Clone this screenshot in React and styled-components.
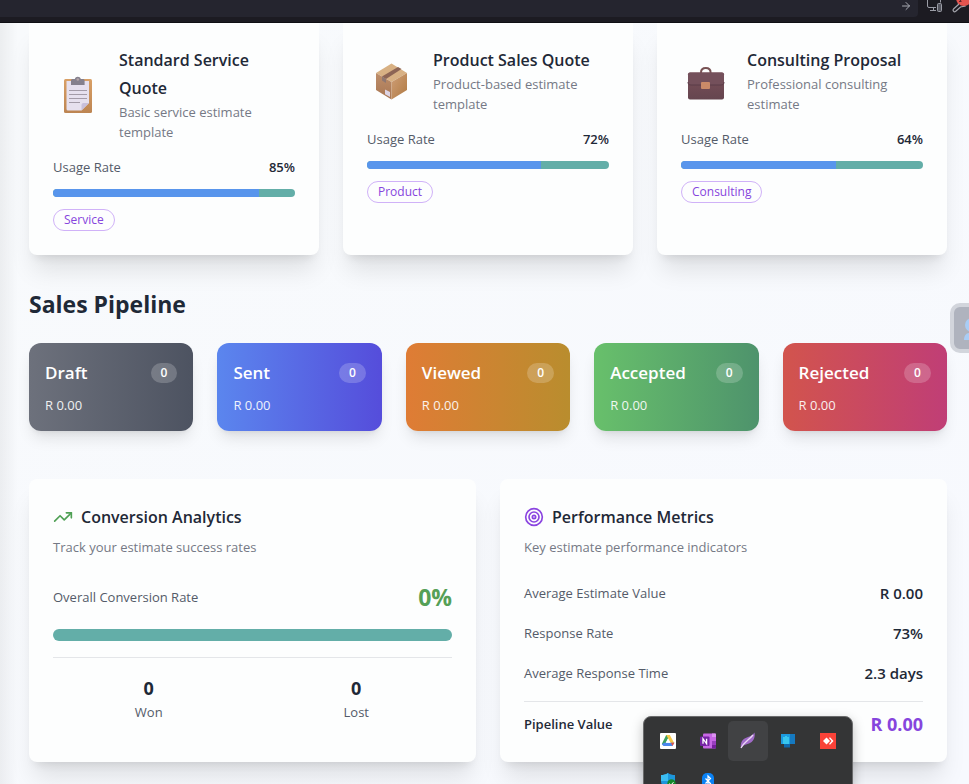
import React from "react";
import styled, { createGlobalStyle } from "styled-components";
import { ArrowRight, TrendingUp } from "lucide-react";

const GlobalStyle = createGlobalStyle`
  *, *::before, *::after { box-sizing: border-box; }
  body {
    margin: 0;
    font-family: "Open Sans", "Noto Sans", sans-serif;
    font-size: 13px;
    line-height: 20px;
    color: #1f2937;
    background: #f7f9fc;
  }
  h2, h3, p, dl, dd, dt { margin: 0; font: inherit; }
`;

const Shell = styled.div`
  display: flex;
  flex-direction: column;
  min-height: 100vh;
`;

/* Browser toolbar */
const Toolbar = styled.header`
  display: flex;
  align-items: flex-start;
  height: 23px;
  background: #1c1b22;
  border-bottom: 1px solid #0f0f14;
  overflow: hidden;
`;

const AddressBar = styled.div`
  flex: 1;
  display: flex;
  justify-content: flex-end;
  height: 17px;
  padding-right: 6px;
  border-radius: 0 0 4px 0;
  background: #25252f;
`;

const BarButton = styled.button`
  display: flex;
  padding: 0;
  border: 0;
  background: none;
  color: #a9abb3;
`;

const BarTools = styled.div`
  display: flex;
  gap: 8px;
  width: 51px;
  padding-left: 8px;
`;

/* Page */
const Main = styled.main`
  flex: 1;
  padding: 0 22px 22px 29px;
  overflow: hidden;
  background:
    linear-gradient(to right, rgba(0, 0, 0, 0.05), rgba(0, 0, 0, 0) 18px),
    linear-gradient(to bottom right, #f8fafc, #f7f9fe);
`;

const Grid = styled.section`
  display: grid;
  grid-template-columns: repeat(${(p) => p.$columns}, minmax(0, 1fr));
  gap: 24px;
`;

const Card = styled.article`
  padding: ${(p) => (p.$flush ? "23px 24px 24px" : "24px")};
  border-radius: ${(p) => (p.$flush ? "0 0 8px 8px" : "8px")};
  background: #fdfefe;
  box-shadow: 0 20px 25px -5px rgba(0, 0, 0, 0.1), 0 8px 10px -6px rgba(0, 0, 0, 0.1);
`;

const TemplateHead = styled.div`
  display: flex;
  align-items: center;
  gap: 16px;
`;

const Emoji = styled.svg`
  flex: none;
  width: 50px;
  height: 44px;
`;

const CardTitle = styled.h3`
  display: flex;
  align-items: center;
  gap: 8px;
  font-size: 16px;
  font-weight: 600;
  line-height: 28px;
`;

const Description = styled.p`
  margin-top: ${(p) => (p.$spaced ? "6px" : "0")};
  color: #757985;
`;

const Row = styled.div`
  display: flex;
  align-items: center;
  justify-content: space-between;
`;

const UsageRow = styled(Row)`
  margin-top: 15px;
`;

const Label = styled.span`
  color: #545b69;
`;

const Strong = styled.span`
  font-weight: 600;
`;

const Track = styled.div`
  height: ${(p) => (p.$thick ? "12px" : "8px")};
  margin-top: ${(p) => (p.$thick ? "16px" : "12px")};
  border-radius: 6px;
  overflow: hidden;
  background: #63aea8;
`;

const Fill = styled.div`
  height: 100%;
  background: #5895ec;
`;

const Tag = styled.span`
  display: inline-flex;
  align-items: center;
  height: 22px;
  margin-top: 12px;
  padding: 0 10px;
  border: 1px solid #d0b2f8;
  border-radius: 11px;
  font-size: 12px;
  font-weight: 500;
  line-height: 16px;
  color: #8645dd;
  vertical-align: top;
`;

const SectionTitle = styled.h2`
  margin: 33px 0 23px;
  font-size: 23px;
  font-weight: 700;
  line-height: 32px;
`;

const Stage = styled.article`
  padding: 16px;
  border-radius: 12px;
  color: #fff;
  background: linear-gradient(to right, ${(p) => p.$from}, ${(p) => p.$to});
  box-shadow: 0 10px 15px -3px rgba(0, 0, 0, 0.1), 0 4px 6px -4px rgba(0, 0, 0, 0.1);
`;

const StageName = styled.h3`
  font-size: 17px;
  font-weight: 600;
  line-height: 28px;
`;

const Count = styled.span`
  padding: 2px 10px;
  border-radius: 10px;
  background: rgba(255, 255, 255, 0.2);
  font-size: 12px;
  font-weight: 600;
  line-height: 16px;
`;

const StageValue = styled.p`
  margin-top: 8px;
  opacity: 0.9;
`;

const Reports = styled(Grid)`
  margin-top: 48px;
`;

const CardBody = styled.div`
  margin-top: 24px;
`;

const Rate = styled.span`
  font-size: 23px;
  font-weight: 700;
  line-height: 32px;
  color: #55a057;
`;

const Stats = styled.dl`
  display: grid;
  grid-template-columns: 1fr 1fr;
  gap: 16px;
  margin-top: 16px;
  padding-top: 16px;
  border-top: 1px solid #e4e6e9;
  text-align: center;
`;

const Stat = styled.div`
  display: flex;
  flex-direction: column-reverse;
  dt { color: #545b69; }
  dd { font-size: 18px; font-weight: 700; line-height: 28px; }
`;

const Metrics = styled.dl`
  display: flex;
  flex-direction: column;
  gap: 16px;
`;

const Metric = styled(Row)`
  dt { color: #545b69; }
  dd { font-size: 15px; font-weight: 600; line-height: 24px; }
`;

const Total = styled(Row)`
  padding-top: 8px;
  border-top: 1px solid #e4e6e9;
  dt { font-weight: 600; }
  dd { font-size: 18px; font-weight: 700; line-height: 28px; color: #8645dd; }
`;

/* Overlays */
const SideHandle = styled.button`
  position: fixed;
  top: 303px;
  right: -31px;
  display: flex;
  align-items: center;
  width: 50px;
  height: 50px;
  padding: 0 0 0 10px;
  border: 4px solid #d2d5dc;
  border-radius: 10px;
  background: #afb3be;
`;

const Tray = styled.aside`
  position: fixed;
  right: 116px;
  bottom: -23px;
  display: grid;
  grid-template-columns: repeat(5, 40px);
  padding: 4px 4px 5px;
  border: 1px solid #6a6b6c;
  border-radius: 8px;
  background: #343536;
  box-shadow: 0 4px 12px rgba(0, 0, 0, 0.25);
`;

const TrayButton = styled.button`
  display: flex;
  align-items: center;
  justify-content: center;
  height: 40px;
  padding: 0;
  border: 0;
  border-radius: 5px;
  background: ${(p) => (p.$active ? "#414244" : "transparent")};
`;

const Clipboard = () => (
  <Emoji viewBox="0 0 50 44" aria-hidden="true">
    <defs>
      <linearGradient id="board" x1="0" y1="0" x2="0" y2="1">
        <stop offset="0" stopColor="#d9a066" />
        <stop offset="1" stopColor="#bd8552" />
      </linearGradient>
    </defs>
    <rect x="11" y="7" width="28" height="34" rx="1.5" fill="url(#board)" />
    <path d="M13.500 9h22.500v22l-7.500 7.500H15a1.500 1.500 0 0 1-1.500-1.500z" fill="#e6e0ee" />
    <path d="M36 31l-7.500 7.500V33a2 2 0 0 1 2-2z" fill="#c8bfda" />
    <path d="M18 13V8.500c0-1 .8-1.500 1.800-1.500h2c.5-1.500 1.500-2.200 3-2.200s2.500.7 3 2.200h2c1 0 1.800.5 1.800 1.500V13z" fill="#85808d" />
    <circle cx="24.800" cy="7.500" r="1.300" fill="#b4a5a8" />
    <path d="M16 18.500h18M16 22.500h18M16 26.500h18M16 30.500h11" stroke="#a39ba8" strokeWidth="1" />
  </Emoji>
);

const Package = () => (
  <Emoji viewBox="0 0 50 44" aria-hidden="true">
    <defs>
      <linearGradient id="boxRight" x1="0" y1="0" x2="1" y2="1">
        <stop offset="0" stopColor="#cf9f78" />
        <stop offset="1" stopColor="#b07a42" />
      </linearGradient>
      <linearGradient id="boxLeft" x1="0" y1="0" x2="0" y2="1">
        <stop offset="0" stopColor="#bd8e6b" />
        <stop offset="1" stopColor="#a87652" />
      </linearGradient>
    </defs>
    <path d="M9 15l15.500-9.500L40 15l-15.500 9z" fill="#d8b184" />
    <path d="M9 15l15.500 9v17.500L9 32z" fill="url(#boxLeft)" />
    <path d="M40 15l-15.500 9v17.500L40 32z" fill="url(#boxRight)" />
    <path d="M15 18.500L31 9l3.500 2-15.500 10z" fill="#8d6555" />
    <path d="M15 18.500l4 2.500v4l-4-2.500z" fill="#8f7770" />
    <path d="M18 31.500l5 2.500v5l-5-2.800z" fill="#ddd4e4" />
  </Emoji>
);

const Briefcase = () => (
  <Emoji viewBox="0 0 50 44" aria-hidden="true">
    <defs>
      <linearGradient id="caseBody" x1="0" y1="0" x2="0" y2="1">
        <stop offset="0" stopColor="#7b5059" />
        <stop offset="1" stopColor="#65454f" />
      </linearGradient>
    </defs>
    <path d="M20 16v-1.500c0-3 1.500-4.500 4.800-4.500s4.800 1.500 4.800 4.500V16" fill="none" stroke="#785254" strokeWidth="2" />
    <rect x="7" y="14.500" width="36" height="27" rx="2" fill="url(#caseBody)" />
    <path d="M7 16.500a2 2 0 0 1 2-2h32a2 2 0 0 1 2 2v7.500c0 2-1 3-3 3H10c-2 0-3-1-3-3z" fill="#74505b" />
    <path d="M7 24c0 2 1 3 3 3h30c2 0 3-1 3-3" fill="none" stroke="#5b3c49" strokeWidth="1" />
    <rect x="20" y="24" width="9" height="7" rx="1" fill="#ca8a68" />
  </Emoji>
);

const Rings = () => (
  <svg width="20" height="20" viewBox="0 0 24 24" fill="none" stroke="#8b45e0" strokeWidth="2" aria-hidden="true">
    <circle cx="12" cy="12" r="10" />
    <circle cx="12" cy="12" r="6" />
    <circle cx="12" cy="12" r="2" />
  </svg>
);

const Devices = () => (
  <svg width="18" height="14" viewBox="0 0 18 14" fill="none" stroke="#9b9da6" strokeWidth="1" aria-hidden="true">
    <path d="M1.500 0v6q0 1.500 1.500 1.500H10M14.500 0v2.500" />
    <path d="M7.500 7.500v2.500M4 10.500h6" />
    <rect x="11.500" y="3.500" width="4" height="8" rx="1" fill="#55565f" />
  </svg>
);

const Wrench = () => (
  <svg width="18" height="14" viewBox="0 0 18 14" aria-hidden="true">
    <path d="M1.500 9L6.500 4.500C6 2.500 7 .5 9 0l1 3 2 1.500L13 6l-4.500 1-5 4.500C2 12.500.3 10.500 1.500 9z" fill="none" stroke="#a5a6ae" strokeWidth="1.200" />
    <circle cx="12" cy="-2" r="8" fill="#e4544f" />
    <path d="M7 1.500h2.500M8.500 0v1.500" stroke="#5e2529" strokeWidth="1.200" />
  </svg>
);

const DriveIcon = () => (
  <svg width="16" height="16" viewBox="0 0 16 16" aria-hidden="true">
    <rect width="16" height="16" rx="1" fill="#fff" />
    <path d="M6.200 2h3.600L4.500 12.500 1.800 11z" fill="#3b9f61" />
    <path d="M6.200 2h3.600l4.400 8h-3.600z" fill="#f5c84a" />
    <path d="M4.200 9.700h10.200l-2 3.300H3.500l-1.700-1.700z" fill="#4a87ee" />
    <path d="M11 9.700h3.400l-2 3.300z" fill="#df5347" />
    <path d="M8 5.500l2.300 4.200H5.700z" fill="#fff" />
  </svg>
);

const NotebookIcon = () => (
  <svg width="16" height="16" viewBox="0 0 16 16" aria-hidden="true">
    <rect x="3" y=".5" width="13" height="15" rx="1" fill="#c867e6" />
    <path d="M12 .500h3a1 1 0 0 1 1 1V4h-4z" fill="#dc92f1" />
    <path d="M12 8h4v4h-4z" fill="#9a3fc0" />
    <path d="M12 12h4v2.500a1 1 0 0 1-1 1h-3z" fill="#761f9e" />
    <rect y="3.500" width="9.500" height="9.500" rx="1" fill="#7522a4" />
    <path d="M3 10.800V5.700l3.600 5.100V5.700" fill="none" stroke="#fff" strokeWidth="1.300" />
  </svg>
);

const FeatherIcon = () => (
  <svg width="16" height="18" viewBox="0 0 16 18" aria-hidden="true">
    <path d="M1 16C0 10 3 6.500 8 5c3-1 5-2 6.500-4.500C15.500 6 13 10 9 11.500 6 12.700 3 13 1 16z" fill="#a06bc8" />
    <path d="M1 16C4 10 9 8 13 3" fill="none" stroke="#ecd9f5" strokeWidth="1.300" />
  </svg>
);

const MonitorIcon = () => (
  <svg width="16" height="16" viewBox="0 0 16 16" aria-hidden="true">
    <path d="M1 1h14v10H1z" fill="#1579c0" />
    <path d="M1 1h9v10H1z" fill="#1c9ade" />
    <path d="M3 4h2V3h2v1h2v7H3z" fill="#38c5ee" />
    <path d="M4 11h6v3.500H4z" fill="#0e68ad" />
  </svg>
);

const RemoteIcon = () => (
  <svg width="16" height="16" viewBox="0 0 16 16" aria-hidden="true">
    <rect width="16" height="16" fill="#f94238" />
    <path d="M6.500 4.500L10 8l-3.500 3.500L3 8z" fill="#fff" />
    <path d="M9 5l1-.7L13.500 8 10 11.700 9 11l2.500-3z" fill="#fff" />
  </svg>
);

const ShieldIcon = () => (
  <svg width="16" height="16" viewBox="0 0 16 16" aria-hidden="true">
    <path d="M8 0c2 1.500 4.500 2 7 2v6c0 4-3 6.500-7 8-4-1.500-7-4-7-8V2c2.500 0 5-.5 7-2z" fill="#1d96dc" />
    <path d="M8 0v8H1V2c2.500 0 5-.5 7-2z" fill="#3cbdf2" />
    <circle cx="11.500" cy="10.500" r="4.200" fill="#15892b" />
    <path d="M9.500 10.500l1.500 1.500 2.500-2.800" fill="none" stroke="#fff" />
  </svg>
);

const BluetoothIcon = () => (
  <svg width="16" height="16" viewBox="0 0 16 16" aria-hidden="true">
    <rect x="2" width="12" height="16" rx="5" fill="#0a82f5" />
    <path d="M5.500 5.500l5 5L8 13V3l2.500 2.500-5 5" fill="none" stroke="#fff" strokeWidth="1.200" />
  </svg>
);

const PersonIcon = () => (
  <svg width="24" height="24" viewBox="0 0 24 24" fill="#a9cdf5" aria-hidden="true">
    <circle cx="8" cy="9" r="7" />
    <path d="M0 24c0-4 2-7 5-7h8c3 0 5 3 5 7z" />
  </svg>
);

const templates = [
  { name: "Standard Service Quote", text: "Basic service estimate template", rate: 85, tag: "Service", Icon: Clipboard },
  { name: "Product Sales Quote", text: "Product-based estimate template", rate: 72, tag: "Product", Icon: Package },
  { name: "Consulting Proposal", text: "Professional consulting estimate", rate: 64, tag: "Consulting", Icon: Briefcase },
];

const stages = [
  { name: "Draft", from: "#6d717c", to: "#4d5361" },
  { name: "Sent", from: "#5b86ee", to: "#554ddb" },
  { name: "Viewed", from: "#df7c35", to: "#b98d2e" },
  { name: "Accepted", from: "#68c06b", to: "#4e936c" },
  { name: "Rejected", from: "#d2544d", to: "#c03e76" },
];

const metrics = [
  ["Average Estimate Value", "R 0.00"],
  ["Response Rate", "73%"],
  ["Average Response Time", "2.3 days"],
];

const trayItems = [
  ["Drive", DriveIcon],
  ["Notebook", NotebookIcon],
  ["Feather", FeatherIcon],
  ["Monitor", MonitorIcon],
  ["Remote desktop", RemoteIcon],
  ["Security", ShieldIcon],
  ["Bluetooth", BluetoothIcon],
];

export default function App() {
  return (
    <Shell>
      <GlobalStyle />
      <Toolbar>
        <AddressBar>
          <BarButton aria-label="Go">
            <ArrowRight size={12} strokeWidth={2} />
          </BarButton>
        </AddressBar>
        <BarTools>
          <BarButton aria-label="Responsive view"><Devices /></BarButton>
          <BarButton aria-label="Developer tools"><Wrench /></BarButton>
        </BarTools>
      </Toolbar>

      <Main>
        <Grid $columns={3}>
          {templates.map(({ name, text, rate, tag, Icon }) => (
            <Card key={name} $flush>
              <TemplateHead>
                <Icon />
                <div>
                  <CardTitle>{name}</CardTitle>
                  <Description>{text}</Description>
                </div>
              </TemplateHead>
              <UsageRow>
                <Label>Usage Rate</Label>
                <Strong>{rate}%</Strong>
              </UsageRow>
              <Track role="progressbar" aria-label="Usage Rate" aria-valuenow={rate}>
                <Fill style={{ width: `${rate}%` }} />
              </Track>
              <Tag>{tag}</Tag>
            </Card>
          ))}
        </Grid>

        <SectionTitle>Sales Pipeline</SectionTitle>
        <Grid $columns={5}>
          {stages.map((s) => (
            <Stage key={s.name} $from={s.from} $to={s.to}>
              <Row>
                <StageName>{s.name}</StageName>
                <Count>0</Count>
              </Row>
              <StageValue>R 0.00</StageValue>
            </Stage>
          ))}
        </Grid>

        <Reports $columns={2}>
          <Card>
            <CardTitle><TrendingUp size={20} color="#4fa055" aria-hidden="true" />Conversion Analytics</CardTitle>
            <Description $spaced>Track your estimate success rates</Description>
            <CardBody>
              <Row>
                <Label>Overall Conversion Rate</Label>
                <Rate>0%</Rate>
              </Row>
              <Track $thick role="progressbar" aria-label="Overall Conversion Rate" aria-valuenow={0} />
              <Stats>
                <Stat><dt>Won</dt><dd>0</dd></Stat>
                <Stat><dt>Lost</dt><dd>0</dd></Stat>
              </Stats>
            </CardBody>
          </Card>
          <Card>
            <CardTitle><Rings />Performance Metrics</CardTitle>
            <Description $spaced>Key estimate performance indicators</Description>
            <CardBody>
              <Metrics>
                {metrics.map(([label, value]) => (
                  <Metric key={label}><dt>{label}</dt><dd>{value}</dd></Metric>
                ))}
                <Total><dt>Pipeline Value</dt><dd>R 0.00</dd></Total>
              </Metrics>
            </CardBody>
          </Card>
        </Reports>
      </Main>

      <SideHandle aria-label="Open panel"><PersonIcon /></SideHandle>
      <Tray>
        {trayItems.map(([label, Icon]) => (
          <TrayButton key={label} aria-label={label} $active={label === "Feather"}><Icon /></TrayButton>
        ))}
      </Tray>
    </Shell>
  );
}
